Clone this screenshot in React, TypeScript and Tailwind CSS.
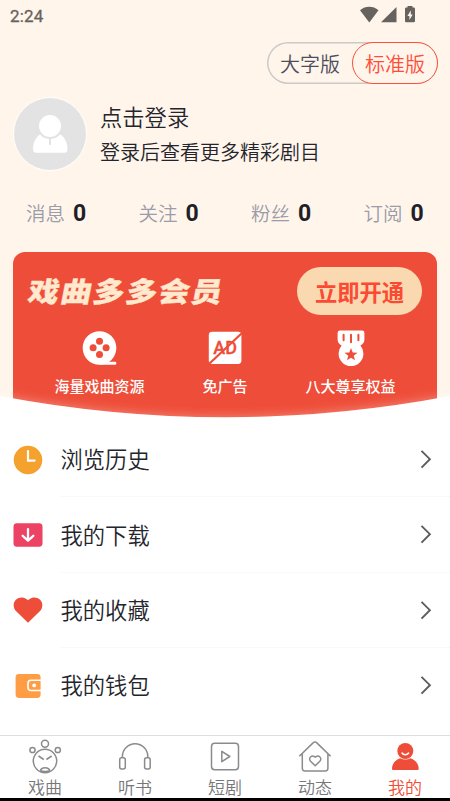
import type { ReactNode } from "react";

const stats = ["消息", "关注", "粉丝", "订阅"];

function FilmIcon() {
  return (
    <svg width="36" height="36" viewBox="0 0 36 36" className="-translate-x-[0.5px]">
      <circle cx="18" cy="18" r="16.8" fill="#fff" />
      <path d="M18 31.8H33.6a1.2 1.2 0 0 1 1.2 1.2v.6a1.2 1.2 0 0 1-1.2 1.2H18z" fill="#fff" />
      <g fill="#ee4e39">
        <circle cx="18" cy="11.2" r="3.5" />
        <circle cx="11.6" cy="17.8" r="3.5" />
        <circle cx="24.6" cy="17.8" r="3.5" />
        <circle cx="18" cy="24.4" r="3.5" />
      </g>
    </svg>
  );
}

function NoAdIcon() {
  return (
    <svg width="36" height="36" viewBox="0 0 36 36">
      <rect x="1.8" y="1.8" width="32.6" height="32.2" rx="3.4" fill="#fff" />
      <text
        x="18.2"
        y="24"
        textAnchor="middle"
        fontFamily="Roboto, sans-serif"
        fontWeight="500"
        fontSize="18"
        fill="#ee4e39"
        stroke="#ee4e39"
        strokeWidth="0.3"
      >
        AD
      </text>
      <path d="M2.5 33.5 34.5 3.5" stroke="#ee4e39" strokeWidth="2.2" />
    </svg>
  );
}

function MedalIcon() {
  return (
    <svg width="36" height="38" viewBox="0 0 36 38">
      <path
        d="M7 .6h22A2.4 2.4 0 0 1 31.4 3v6.400c0 2.800-1.800 5-4 6.200a12.400 12.400 0 1 1-18.800 0C6.400 14.400 4.600 12.200 4.600 9.400V3A2.400 2.400 0 0 1 7 .6z"
        fill="#fff"
      />
      <path d="M10.600 4.800v5.400M18 4.800v7.400M25.400 4.800v5.400" stroke="#ee4e39" strokeWidth="2" strokeLinecap="round" />
      <path
        d="m18 18 1.700 4.500 4.800.2-3.800 3 1.300 4.600-4-2.600-4 2.600 1.300-4.600-3.800-3 4.800-.2z"
        fill="#ee4e39"
      />
    </svg>
  );
}

const features = [
  { label: "海量戏曲资源", icon: <FilmIcon /> },
  { label: "免广告", icon: <NoAdIcon /> },
  { label: "八大尊享权益", icon: <MedalIcon /> },
];

const menu: { label: string; icon: ReactNode }[] = [
  {
    label: "浏览历史",
    icon: (
      <>
        <circle cx="15" cy="15" r="14.3" fill="#f4a12d" />
        <path d="M15 6v9.600h6.600" fill="none" stroke="#fff" strokeWidth="2.2" strokeLinecap="round" />
      </>
    ),
  },
  {
    label: "我的下载",
    icon: (
      <>
        <rect x=".5" y="3.3" width="29" height="23.4" rx="3.4" fill="#ec4263" />
        <path
          d="M15 9.200v11M9.700 15.800l5.300 4.800 5.300-4.800"
          fill="none"
          stroke="#fff"
          strokeWidth="2.3"
          strokeLinecap="round"
          strokeLinejoin="round"
        />
      </>
    ),
  },
  {
    label: "我的收藏",
    icon: (
      <path
        d="M15 27.800 3.200 16.200C-.2 12.800-.1 7.600 2.900 4.700 6 1.800 10.600 1.600 13.700 4.200L15 5.300l1.300-1.100c3.100-2.600 7.700-2.400 10.800.5 3 2.900 3.100 8.100-.3 11.500z"
        fill="#ee4e39"
      />
    ),
  },
  {
    label: "我的钱包",
    icon: (
      <>
        <rect x="2.6" y="3" width="25" height="24" rx="3.4" fill="#ff9d45" />
        <path d="M28 9.300H18a3 3 0 0 0-3 3v4.200a3 3 0 0 0 3 3h10" fill="none" stroke="#fff" strokeWidth="1.6" />
        <circle cx="21.2" cy="14.4" r="1.9" fill="#fff" />
      </>
    ),
  },
];

const tabs: { label: string; icon: ReactNode; active?: boolean }[] = [
  {
    label: "戏曲",
    icon: (
      <>
        <circle cx="18" cy="22" r="11.7" />
        <circle cx="18" cy="4.8" r="3.5" />
        <circle cx="5.5" cy="11" r="2.6" />
        <circle cx="30.8" cy="11" r="2.6" />
        <path d="m11.500 17 5.300 3.500M24.700 17l-5.300 3.500M13.300 32c1-4.200 8.600-4.200 9.600 0M13.300 31.800c3 1 6.600 1 9.600 0" />
      </>
    ),
  },
  {
    label: "听书",
    icon: (
      <>
        <path d="M5.400 19v-1.500a12.700 12.700 0 0 1 25.400 0V19" />
        <rect x="2.7" y="18.8" width="5.6" height="11.2" rx="2" />
        <rect x="27.6" y="18.8" width="5.6" height="11.2" rx="2" />
      </>
    ),
  },
  {
    label: "短剧",
    icon: (
      <>
        <rect x="4.5" y="4.2" width="27" height="26.6" rx="3.2" />
        <path d="M14.800 12.300v10.400l8-5.200z" strokeLinejoin="round" />
      </>
    ),
  },
  {
    label: "动态",
    icon: (
      <>
        <path d="M2.300 17.300 16.300 3.600a2.300 2.300 0 0 1 3.300 0l14 13.700M5.300 14.700v14.600a2.600 2.600 0 0 0 2.600 2.600h20.400a2.600 2.600 0 0 0 2.600-2.600V14.700" />
        <path d="m18.200 26.800-4.600-4.500c-3-3.300 1.700-7.500 4.600-4 2.900-3.500 7.600.7 4.600 4z" strokeLinejoin="round" />
      </>
    ),
  },
  {
    label: "我的",
    active: true,
    icon: (
      <>
        <circle cx="18.3" cy="12" r="8" fill="#ee4e39" stroke="none" />
        <path
          d="M5 29.800c0-5.200 3.700-9 8-10.500 3.200 1.600 7.500 1.600 10.700 0 4.300 1.500 8 5.300 8 10.500 0 .8-.6 1.300-1.300 1.300H6.300c-.7 0-1.300-.5-1.300-1.300z"
          fill="#ee4e39"
          stroke="none"
        />
        <path d="M15 14c1.500 2.200 5.100 2.200 6.600 0" stroke="#fff" strokeWidth="1.5" strokeLinecap="round" />
      </>
    ),
  },
];

function StatusBar() {
  return (
    <div className="flex h-8 items-center justify-between pl-[10px] pr-[34px] text-[#66635e]">
      <span className="font-[Roboto] text-[17px] font-normal leading-none tracking-[0.2px] [-webkit-text-stroke:0.3px_#66635e]">
        2:24
      </span>
      <svg width="56" height="18" viewBox="0 0 56 18" fill="currentColor" className="-mt-[2px]">
        <path d="M0 4.200C5.500-.3 13-.3 18.500 4.200L9.300 16.500z" />
        <path d="M36.500 1v15.200H21z" />
        <path d="M47.500 0h5v1.500h1.300a1.200 1.200 0 0 1 1.200 1.200V15a1.200 1.200 0 0 1-1.200 1.200h-7.600A1.200 1.200 0 0 1 45 15V2.700a1.200 1.200 0 0 1 1.200-1.200h1.300z" />
        <path d="M50.800 4.500 47.400 10h2v4l3.300-5.400h-1.900z" fill="#fff5eb" />
      </svg>
    </div>
  );
}

export default function App() {
  return (
    <div className="flex h-[801px] w-[450px] flex-col overflow-hidden bg-white font-['Noto_Sans_CJK_SC',sans-serif] font-[350] text-[#24252c]">
      <header className="relative h-[421px] shrink-0 bg-[#fff5eb]">
        <StatusBar />

        {/* Text size switch */}
        <div className="ml-[267px] mt-[10px] flex h-[42px] w-[171px] rounded-full text-[20px] shadow-[inset_0_0_0_1.5px_#cccac8]">
          <span className="w-[85px] pl-[13px] leading-[43px] text-[#4c4d5c]">大字版</span>
          <span className="w-[86px] rounded-full border-[1.5px] border-[#f9513c] bg-[#fff5eb] text-center leading-[41px] text-[#ff4d38]">
            标准版
          </span>
        </div>

        {/* Profile */}
        <div className="mt-[13px] flex h-[74px] pl-[13px]">
          <div className="size-[74px] rounded-full border border-white bg-[#e3e3e3]">
            <svg width="72" height="72" viewBox="0 0 72 72" fill="#fff">
              <path d="M19 51c0-7.500 4-14 10-16 4 3.300 10.500 3.300 14.500 0 6 2 10 8.500 10 16 0 2.200-1 3.700-3 3.700H22c-2 0-3-1.500-3-3.700z" />
              <path d="M36 39v8" stroke="#e3e3e3" strokeWidth="2" />
              <circle cx="36" cy="28" r="12" stroke="#e3e3e3" strokeWidth="2" />
            </svg>
          </div>
          <div className="ml-[13px] pt-[2px]">
            <div className="text-[22.3px] leading-[34px]">点击登录</div>
            <div className="text-[20px] leading-[37px]">登录后查看更多精彩剧目</div>
          </div>
        </div>

        {/* Counters */}
        <div className="mt-[26px] grid grid-cols-4">
          {stats.map((label) => (
            <div key={label} className="flex h-8 items-center pl-[26px] text-[19.5px] text-[#9a9ca8]">
              {label}
              <span className="ml-[8px] mt-[2px] font-[Roboto] text-[23px] font-bold text-[#1f2027]">0</span>
            </div>
          ))}
        </div>

        {/* Membership card */}
        <div className="mx-[13px] mt-[23px] h-[169px] rounded-t-[12px] bg-[#ee4e39]">
          <div className="flex items-start justify-between px-[15px] pt-[15px]">
            <h2 className="origin-center -skew-x-[10deg] scale-y-[0.9] pl-px text-[31px] font-black leading-[45px] tracking-[1.6px] text-[#ffe9cf] [-webkit-text-stroke:0.4px_#ffe9cf]">
              戏曲多多会员
            </h2>
            <button className="h-[48px] w-[125px] rounded-full bg-[#fad9b0] text-[22.3px] font-bold leading-[46px] text-[#fb4a33]">
              立即开通
            </button>
          </div>
          <div className="flex justify-between px-[24px] pt-[15px]">
            {features.map((item) => (
              <div key={item.label} className="flex w-[125px] flex-col items-center">
                <div className="flex h-[38px] items-start">{item.icon}</div>
                <span className="whitespace-nowrap text-[15px] font-medium leading-[35px] text-white">{item.label}</span>
              </div>
            ))}
          </div>
        </div>

        {/* White sheet that curves over the card */}
        <svg
          width="450"
          height="27"
          viewBox="0 0 450 27"
          className="absolute bottom-0 left-0 overflow-visible [filter:drop-shadow(0_-2px_4px_rgba(255,255,255,0.25))]"
        >
          <path d="M-10 0 0 2Q225 44.500 450 2l10-2V40H-10z" fill="#fff" />
        </svg>
      </header>

      {/* Menu */}
      <main className="h-[314px] shrink-0 pt-px">
        {menu.map((item) => (
          <div key={item.label} className="group flex h-[75.3px] items-center pl-[12.5px]">
            <svg width="30" height="30" viewBox="0 0 30 30">
              {item.icon}
            </svg>
            <div className="ml-[18px] flex h-full flex-1 items-center justify-between border-b border-[#f8f8f8] pr-[16px] group-last:border-transparent">
              <span className="text-[22.3px]">{item.label}</span>
              <svg width="16" height="20" viewBox="0 0 16 20" fill="none" stroke="#5c5c5f" strokeWidth="1.9">
                <path d="m3.500 1.800 8.400 8.400-8.400 8.400" />
              </svg>
            </div>
          </div>
        ))}
      </main>

      {/* Tab bar */}
      <nav className="grid h-[63px] shrink-0 grid-cols-5 border-t border-[#dedede]">
        {tabs.map((tab) => (
          <div key={tab.label} className={`flex flex-col items-center pt-[3px] ${tab.active ? "text-[#ee4e39]" : "text-[#77777a]"}`}>
            <svg width="36" height="36" viewBox="0 0 36 36" fill="none" stroke="#8b8b8d" strokeWidth="1.5">
              {tab.icon}
            </svg>
            <span className="text-[17px] leading-[24px]">{tab.label}</span>
          </div>
        ))}
      </nav>
      <div className="h-[3px] shrink-0 bg-black" />
    </div>
  );
}
